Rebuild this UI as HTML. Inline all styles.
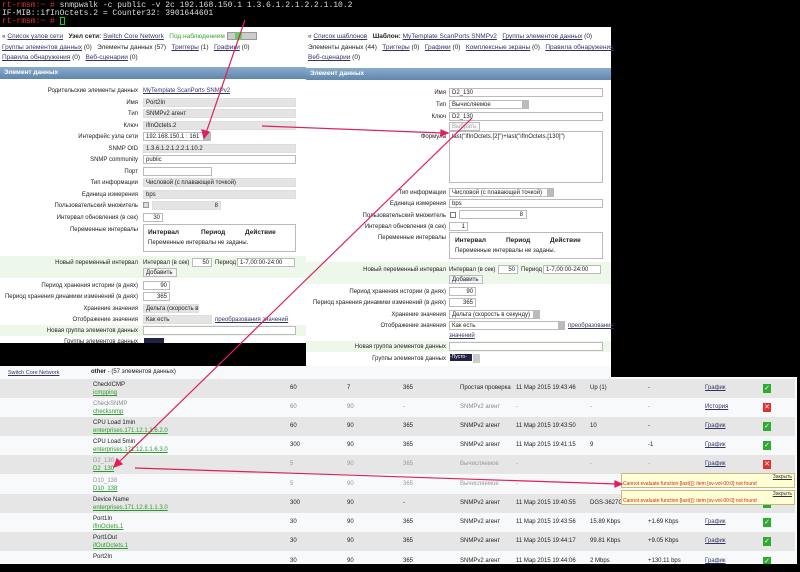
<!DOCTYPE html>
<html><head><meta charset="utf-8"><style>
*{margin:0;padding:0;box-sizing:border-box}
body{width:800px;height:572px;background:#000;position:relative;overflow:hidden;font-family:"Liberation Sans","DejaVu Sans",sans-serif;font-size:6px;color:#222}
.a{position:absolute;white-space:nowrap}
.term{font-family:"Liberation Mono",monospace;font-size:8px;color:#ddd}
.r{color:#e03030}
.p{background:#fff;position:absolute}
.lnk{color:#336;text-decoration:underline}
.gl{color:#2a9a2a;text-decoration:underline}
.hb{position:absolute;height:12px;background:linear-gradient(#8aaccb,#5f86ad);color:#fff;font-weight:bold;font-size:6.5px;line-height:12px;padding-left:4px}
.lb{position:absolute;text-align:right;white-space:nowrap}
.in{position:absolute;height:9px;border:1px solid #bbb;background:#fff;font-size:6px;line-height:8px;padding-left:2px;white-space:nowrap}
.dis{background:#e4e4e4;border-color:#ddd}
.g{position:absolute;background:#eef8ea}
.box{position:absolute;border:1px solid #bbb;background:#fff}
.row{position:absolute;left:0;width:795px;height:19.3px}
.c{position:absolute;white-space:nowrap;font-size:6px}
.ok{position:absolute;width:8px;height:9px;background:#2eaa2e;color:#fff;font-size:7px;line-height:9px;text-align:center}
.no{position:absolute;width:8px;height:9px;background:#e03030;color:#fff;font-size:7px;line-height:9px;text-align:center}
.pop{position:absolute;left:621px;width:174px;height:15px;background:#ffffd6;border:1px solid #c9b880;overflow:hidden}
.pop .t{position:absolute;left:1px;top:7px;font-size:5px;color:#e02020;white-space:nowrap}
.pop .z{position:absolute;right:2px;top:0;font-size:5px;color:#333;text-decoration:underline}
</style></head><body>

<div class="a term" style="left:2px;top:1px"><span class="r">rt-rmsm:~ #</span> snmpwalk -c public -v 2c 192.168.150.1 1.3.6.1.2.1.2.2.1.10.2</div>
<div class="a term" style="left:2px;top:9px">IF-MIB::ifInOctets.2 = Counter32: 3901644601</div>
<div class="a term" style="left:2px;top:17px"><span class="r">rt-rmsm:~ #</span> <span style="display:inline-block;width:5px;height:8px;border:1px solid #2c2;vertical-align:middle"></span></div>

<!-- LEFT PANEL -->
<div class="p" style="left:0;top:27px;width:307px;height:316px"></div>
<div class="a" style="left:2px;top:33px;font-size:6.5px">« <span class="lnk">Список узлов сети</span> &nbsp; <b>Узел сети:</b> <span class="lnk">Switch Core Network</span> &nbsp; <span style="color:#3a3">Под наблюдением</span></div>
<div class="a" style="left:227px;top:32px;width:30px;height:8px;background:#ccc;border:1px solid #999"></div>
<div class="a" style="left:235px;top:32px;width:7px;height:8px;background:#6c6"></div>
<div class="a" style="left:2px;top:44px;font-size:6.5px"><span class="lnk">Группы элементов данных</span> (0) &nbsp; Элементы данных (57) &nbsp; <span class="lnk">Триггеры</span> (1) &nbsp; <span class="lnk">Графики</span> (0)</div>
<div class="a" style="left:2px;top:54px;font-size:6.5px"><span class="lnk">Правила обнаружения</span> (0) &nbsp; <span class="lnk">Веб-сценарии</span> (0)</div>
<div class="hb" style="left:0;top:67px;width:307px">Элемент данных</div>

<div class="lb" style="left:0;width:138px;top:88px">Родительские элементы данных</div><div class="a lnk" style="left:143px;top:88px">MyTemplate ScanPorts SNMPv2</div>
<div class="lb" style="left:0;width:138px;top:100px">Имя</div><div class="in dis" style="left:143px;top:98px;width:153px">Port2In</div>
<div class="lb" style="left:0;width:138px;top:111px">Тип</div><div class="in dis" style="left:143px;top:109px;width:153px">SNMPv2 агент</div>
<div class="lb" style="left:0;width:138px;top:123px">Ключ</div><div class="in dis" style="left:143px;top:121px;width:153px">ifInOctets.2</div>
<div class="lb" style="left:0;width:138px;top:134px">Интерфейс узла сети</div><div class="in" style="left:143px;top:132px;width:68px">192.168.150.1 : 161</div><div class="a" style="left:203px;top:133px;width:8px;height:8px;background:#bbb"></div>
<div class="lb" style="left:0;width:138px;top:146px">SNMP OID</div><div class="in dis" style="left:143px;top:144px;width:153px">1.3.6.1.2.1.2.2.1.10.2</div>
<div class="lb" style="left:0;width:138px;top:157px">SNMP community</div><div class="in" style="left:143px;top:155px;width:153px">public</div>
<div class="lb" style="left:0;width:138px;top:169px">Порт</div><div class="in" style="left:143px;top:167px;width:69px"></div>
<div class="lb" style="left:0;width:138px;top:180px">Тип информации</div><div class="in dis" style="left:143px;top:178px;width:153px">Числовой (с плавающей точкой)</div>
<div class="lb" style="left:0;width:138px;top:192px">Единица измерения</div><div class="in dis" style="left:143px;top:190px;width:153px">bps</div>
<div class="lb" style="left:0;width:138px;top:203px">Пользовательский множитель</div><div class="a" style="left:143px;top:202px;width:6px;height:6px;border:1px solid #999;background:#ddd"></div><div class="in dis" style="left:152px;top:201px;width:69px;text-align:right;padding-right:2px">8</div>
<div class="lb" style="left:0;width:138px;top:215px">Интервал обновления (в сек)</div><div class="in" style="left:143px;top:213px;width:20px;text-align:right;padding-right:2px">30</div>
<div class="lb" style="left:0;width:138px;top:227px">Переменные интервалы</div>
<div class="box" style="left:143px;top:224px;width:153px;height:28px"></div>
<div class="a" style="left:148px;top:229px;font-weight:bold;font-size:6.5px">Интервал</div><div class="a" style="left:201px;top:229px;font-weight:bold;font-size:6.5px">Период</div><div class="a" style="left:245px;top:229px;font-weight:bold;font-size:6.5px">Действие</div>
<div class="a" style="left:148px;top:240px">Переменные интервалы не заданы.</div>
<div class="g" style="left:0;top:256px;width:307px;height:22px"></div>
<div class="lb" style="left:0;width:138px;top:260px">Новый переменный интервал</div>
<div class="a" style="left:143px;top:260px">Интервал (в сек)</div><div class="in" style="left:192px;top:258px;width:20px;text-align:right;padding-right:2px">50</div><div class="a" style="left:215px;top:260px">Период</div><div class="in" style="left:237px;top:258px;width:58px">1-7,00:00-24:00</div>
<div class="in" style="left:143px;top:268px;width:34px;height:9px;background:#f4f4f4">Добавить</div>
<div class="lb" style="left:0;width:138px;top:283px">Период хранения истории (в днях)</div><div class="in" style="left:143px;top:281px;width:27px;text-align:right;padding-right:2px">90</div>
<div class="lb" style="left:0;width:138px;top:294px">Период хранения динамики изменений (в днях)</div><div class="in" style="left:143px;top:292px;width:27px;text-align:right;padding-right:2px">365</div>
<div class="lb" style="left:0;width:138px;top:306px">Хранение значения</div><div class="in dis" style="left:143px;top:304px;width:56px">Дельта (скорость в</div>
<div class="lb" style="left:0;width:138px;top:317px">Отображение значения</div><div class="in dis" style="left:143px;top:315px;width:69px">Как есть</div><div class="a lnk" style="left:215px;top:317px">преобразования значений</div>
<div class="g" style="left:0;top:325px;width:307px;height:11px"></div>
<div class="lb" style="left:0;width:138px;top:328px">Новая группа элементов данных</div><div class="in" style="left:143px;top:326px;width:153px"></div>
<div class="lb" style="left:0;width:138px;top:339px">Группы элементов данных</div><div class="a" style="left:144px;top:338px;width:20px;height:5px;background:#224"></div>

<!-- RIGHT PANEL -->
<div class="p" style="left:306px;top:27px;width:305px;height:339px"></div>
<div class="a" style="left:308px;top:33px;font-size:6.5px">« <span class="lnk">Список шаблонов</span> &nbsp; <b>Шаблон:</b> <span class="lnk">MyTemplate ScanPorts SNMPv2</span> &nbsp; <span class="lnk">Группы элементов данных</span> (0)</div>
<div class="a" style="left:308px;top:44px;font-size:6.5px">Элементы данных (44) &nbsp; <span class="lnk">Триггеры</span> (0) &nbsp; <span class="lnk">Графики</span> (0) &nbsp; <span class="lnk">Комплексные экраны</span> (0) &nbsp; <span class="lnk">Правила обнаружения</span></div>
<div class="a" style="left:308px;top:54px;font-size:6.5px"><span class="lnk">Веб-сценарии</span> (0)</div>
<div class="hb" style="left:306px;top:68px;width:305px">Элемент данных</div>
<div class="lb" style="left:306px;width:140px;top:90px">Имя</div><div class="in" style="left:449px;top:88px;width:154px">D2_130</div>
<div class="lb" style="left:306px;width:140px;top:102px">Тип</div><div class="in" style="left:449px;top:100px;width:80px">Вычисляемое</div><div class="a" style="left:522px;top:101px;width:7px;height:7px;background:#bbb"></div>
<div class="lb" style="left:306px;width:140px;top:114px">Ключ</div><div class="in" style="left:449px;top:112px;width:154px">D2_130</div>
<div class="in" style="left:449px;top:122px;width:31px;color:#aaa;background:#f6f6f6">Выбрать</div>
<div class="lb" style="left:306px;width:140px;top:134px">Формула</div>
<div class="box" style="left:449px;top:131px;width:154px;height:52px;padding:2px;font-size:6px">last("ifInOctets.[2]")+last("ifInOctets.[130]")</div>
<div class="lb" style="left:306px;width:140px;top:190px">Тип информации</div><div class="in" style="left:449px;top:188px;width:105px">Числовой (с плавающей точкой)</div><div class="a" style="left:547px;top:189px;width:7px;height:7px;background:#bbb"></div>
<div class="lb" style="left:306px;width:140px;top:201px">Единица измерения</div><div class="in" style="left:449px;top:199px;width:154px">bps</div>
<div class="lb" style="left:306px;width:140px;top:213px">Пользовательский множитель</div><div class="a" style="left:450px;top:212px;width:6px;height:6px;border:1px solid #777"></div><div class="in" style="left:459px;top:210px;width:68px;text-align:right;padding-right:3px">8</div>
<div class="lb" style="left:306px;width:140px;top:224px">Интервал обновления (в сек)</div><div class="in" style="left:449px;top:222px;width:19px;text-align:right;padding-right:2px">1</div>
<div class="lb" style="left:306px;width:140px;top:235px">Переменные интервалы</div>
<div class="box" style="left:449px;top:232px;width:154px;height:27px"></div>
<div class="a" style="left:455px;top:237px;font-weight:bold;font-size:6.5px">Интервал</div><div class="a" style="left:506px;top:237px;font-weight:bold;font-size:6.5px">Период</div><div class="a" style="left:550px;top:237px;font-weight:bold;font-size:6.5px">Действие</div>
<div class="a" style="left:455px;top:248px">Переменные интервалы не заданы.</div>
<div class="g" style="left:306px;top:262px;width:305px;height:22px"></div>
<div class="lb" style="left:306px;width:140px;top:267px">Новый переменный интервал</div>
<div class="a" style="left:449px;top:267px">Интервал (в сек)</div><div class="in" style="left:498px;top:265px;width:20px;text-align:right;padding-right:2px">50</div><div class="a" style="left:521px;top:267px">Период</div><div class="in" style="left:543px;top:265px;width:58px">1-7,00:00-24:00</div>
<div class="in" style="left:449px;top:275px;width:34px;background:#f4f4f4">Добавить</div>
<div class="lb" style="left:306px;width:140px;top:289px">Период хранения истории (в днях)</div><div class="in" style="left:449px;top:287px;width:27px;text-align:right;padding-right:2px">90</div>
<div class="lb" style="left:306px;width:140px;top:300px">Период хранения динамики изменений (в днях)</div><div class="in" style="left:449px;top:298px;width:27px;text-align:right;padding-right:2px">365</div>
<div class="lb" style="left:306px;width:140px;top:312px">Хранение значения</div><div class="in" style="left:449px;top:310px;width:91px">Дельта (скорость в секунду)</div><div class="a" style="left:533px;top:311px;width:7px;height:7px;background:#bbb"></div>
<div class="lb" style="left:306px;width:140px;top:323px">Отображение значения</div><div class="in" style="left:449px;top:321px;width:116px">Как есть</div><div class="a" style="left:558px;top:322px;width:7px;height:7px;background:#bbb"></div><div class="a lnk" style="left:568px;top:323px">преобразования</div>
<div class="a lnk" style="left:449px;top:333px">значений</div>
<div class="g" style="left:306px;top:341px;width:305px;height:11px"></div>
<div class="lb" style="left:306px;width:140px;top:344px">Новая группа элементов данных</div><div class="in" style="left:449px;top:342px;width:154px"></div>
<div class="lb" style="left:306px;width:140px;top:356px">Группы элементов данных</div><div class="a" style="left:450px;top:354px;width:22px;height:7px;background:#224;color:#fff;font-size:5px">-Пусто-</div><div class="a" style="left:473px;top:354px;width:7px;height:9px;background:#ccc"></div>

<!-- BOTTOM TABLE -->
<div class="p" style="left:0;top:366px;width:797px;height:198px;background:#f7f9fb"></div>
<div class="a" style="left:611px;top:366px;width:189px;height:11px;background:#000"></div>
<div class="a lnk" style="left:8px;top:370px;font-size:5.5px">Switch Core Network</div>
<div class="a" style="left:91px;top:369px"><b>other</b> - (57 элементов данных)</div>

<div class="row" style="top:379px;background:#e6e6e6"><div class="c" style="left:93px;top:3px">CheckICMP</div><div class="c gl" style="left:93px;top:11px">icmpping</div><div class="c" style="left:290px;top:6px">60</div><div class="c" style="left:347px;top:6px">7</div><div class="c" style="left:403px;top:6px">365</div><div class="c" style="left:460px;top:6px">Простая проверка</div><div class="c" style="left:516px;top:6px">11 Мар 2015 19:43:46</div><div class="c" style="left:590px;top:6px">Up (1)</div><div class="c" style="left:648px;top:6px">-</div><div class="c lnk" style="left:705px;top:6px">График</div><div class="ok" style="left:763px;top:5px">✓</div></div>
<div class="row" style="top:398px;background:#f7f9fb;color:#888"><div class="c" style="left:93px;top:3px">CheckSNMP</div><div class="c gl" style="left:93px;top:11px">checksnmp</div><div class="c" style="left:290px;top:6px">60</div><div class="c" style="left:347px;top:6px">90</div><div class="c" style="left:403px;top:6px">-</div><div class="c" style="left:460px;top:6px">SNMPv2 агент</div><div class="c" style="left:516px;top:6px">-</div><div class="c" style="left:590px;top:6px">-</div><div class="c" style="left:648px;top:6px">-</div><div class="c lnk" style="left:705px;top:6px">История</div><div class="no" style="left:763px;top:5px">✕</div></div>
<div class="row" style="top:417px;background:#e6e6e6"><div class="c" style="left:93px;top:3px">CPU Load 1min</div><div class="c gl" style="left:93px;top:11px">enterprises.171.12.1.1.6.2.0</div><div class="c" style="left:290px;top:6px">60</div><div class="c" style="left:347px;top:6px">90</div><div class="c" style="left:403px;top:6px">365</div><div class="c" style="left:460px;top:6px">SNMPv2 агент</div><div class="c" style="left:516px;top:6px">11 Мар 2015 19:43:50</div><div class="c" style="left:590px;top:6px">10</div><div class="c" style="left:648px;top:6px">-</div><div class="c lnk" style="left:705px;top:6px">График</div><div class="ok" style="left:763px;top:5px">✓</div></div>
<div class="row" style="top:436px;background:#f7f9fb"><div class="c" style="left:93px;top:3px">CPU Load 5min</div><div class="c gl" style="left:93px;top:11px">enterprises.171.12.1.1.6.3.0</div><div class="c" style="left:290px;top:6px">300</div><div class="c" style="left:347px;top:6px">90</div><div class="c" style="left:403px;top:6px">365</div><div class="c" style="left:460px;top:6px">SNMPv2 агент</div><div class="c" style="left:516px;top:6px">11 Мар 2015 19:41:15</div><div class="c" style="left:590px;top:6px">9</div><div class="c" style="left:648px;top:6px">-1</div><div class="c lnk" style="left:705px;top:6px">График</div><div class="ok" style="left:763px;top:5px">✓</div></div>
<div class="row" style="top:455px;background:#e6e6e6;color:#999"><div class="c" style="left:93px;top:3px">D2_130</div><div class="c gl" style="left:93px;top:11px">D2_130</div><div class="c" style="left:290px;top:6px">5</div><div class="c" style="left:347px;top:6px">90</div><div class="c" style="left:403px;top:6px">365</div><div class="c" style="left:460px;top:6px">Вычисляемое</div><div class="c" style="left:516px;top:6px">-</div><div class="c" style="left:590px;top:6px">-</div><div class="c" style="left:648px;top:6px">-</div><div class="c lnk" style="left:705px;top:6px">График</div><div class="no" style="left:763px;top:5px">✕</div></div>
<div class="row" style="top:475px;background:#f7f9fb;color:#999"><div class="c" style="left:93px;top:3px">D10_138</div><div class="c gl" style="left:93px;top:11px">D10_138</div><div class="c" style="left:290px;top:6px">5</div><div class="c" style="left:347px;top:6px">90</div><div class="c" style="left:403px;top:6px">365</div><div class="c" style="left:460px;top:6px">Вычисляемое</div><div class="c" style="left:516px;top:6px">-</div></div>
<div class="row" style="top:494px;background:#e6e6e6"><div class="c" style="left:93px;top:3px">Device Name</div><div class="c gl" style="left:93px;top:11px">enterprises.171.12.8.1.1.3.0</div><div class="c" style="left:290px;top:6px">300</div><div class="c" style="left:347px;top:6px">90</div><div class="c" style="left:403px;top:6px">-</div><div class="c" style="left:460px;top:6px">SNMPv2 агент</div><div class="c" style="left:516px;top:6px">11 Мар 2015 19:40:55</div><div class="c" style="left:590px;top:6px">DGS-3627G</div><div class="ok" style="left:763px;top:5px">✓</div></div>
<div class="row" style="top:513px;background:#f7f9fb"><div class="c" style="left:93px;top:3px">Port1In</div><div class="c gl" style="left:93px;top:11px">ifInOctets.1</div><div class="c" style="left:290px;top:6px">30</div><div class="c" style="left:347px;top:6px">90</div><div class="c" style="left:403px;top:6px">365</div><div class="c" style="left:460px;top:6px">SNMPv2 агент</div><div class="c" style="left:516px;top:6px">11 Мар 2015 19:43:56</div><div class="c" style="left:590px;top:6px">15.89 Kbps</div><div class="c" style="left:648px;top:6px">+1.69 Kbps</div><div class="c lnk" style="left:705px;top:6px">График</div><div class="ok" style="left:763px;top:5px">✓</div></div>
<div class="row" style="top:532px;background:#e6e6e6"><div class="c" style="left:93px;top:3px">Port1Out</div><div class="c gl" style="left:93px;top:11px">ifOutOctets.1</div><div class="c" style="left:290px;top:6px">30</div><div class="c" style="left:347px;top:6px">90</div><div class="c" style="left:403px;top:6px">365</div><div class="c" style="left:460px;top:6px">SNMPv2 агент</div><div class="c" style="left:516px;top:6px">11 Мар 2015 19:44:17</div><div class="c" style="left:590px;top:6px">99.81 Kbps</div><div class="c" style="left:648px;top:6px">+9.05 Kbps</div><div class="c lnk" style="left:705px;top:6px">График</div><div class="ok" style="left:763px;top:5px">✓</div></div>
<div class="row" style="top:551px;background:#f7f9fb;height:13px;overflow:hidden"><div class="c" style="left:93px;top:3px">Port2In</div><div class="c" style="left:290px;top:7px">30</div><div class="c" style="left:347px;top:7px">90</div><div class="c" style="left:403px;top:7px">365</div><div class="c" style="left:460px;top:7px">SNMPv2 агент</div><div class="c" style="left:516px;top:7px">11 Мар 2015 19:44:06</div><div class="c" style="left:590px;top:7px">2 Mbps</div><div class="c" style="left:648px;top:7px">+130.11 bps</div><div class="c lnk" style="left:705px;top:7px">График</div><div class="ok" style="left:763px;top:6px">✓</div></div>

<div class="pop" style="top:473px"><div class="z">Закрыть</div><div class="t">Cannot evaluate function [last()]: item [sv-vol-00:0] not found</div></div>
<div class="pop" style="top:490px"><div class="z">Закрыть</div><div class="t">Cannot evaluate function [last()]: item [sv-vol-00:0] not found</div></div>

<svg class="a" style="left:0;top:0" width="800" height="572">
<g stroke="#e0205a" stroke-width="1.2" fill="#e0205a">
<line x1="245" y1="20" x2="206" y2="133"/><polygon points="204,138 202,130 209,132"/>
<line x1="262" y1="126" x2="443" y2="133"/><polygon points="448,133 441,130 441,136"/>
<line x1="472" y1="118" x2="118" y2="463"/><polygon points="114,467 117,459 122,464"/>
<line x1="135" y1="468" x2="617" y2="484"/><polygon points="622,484 615,481 615,487"/>
</g></svg>
</body></html>
